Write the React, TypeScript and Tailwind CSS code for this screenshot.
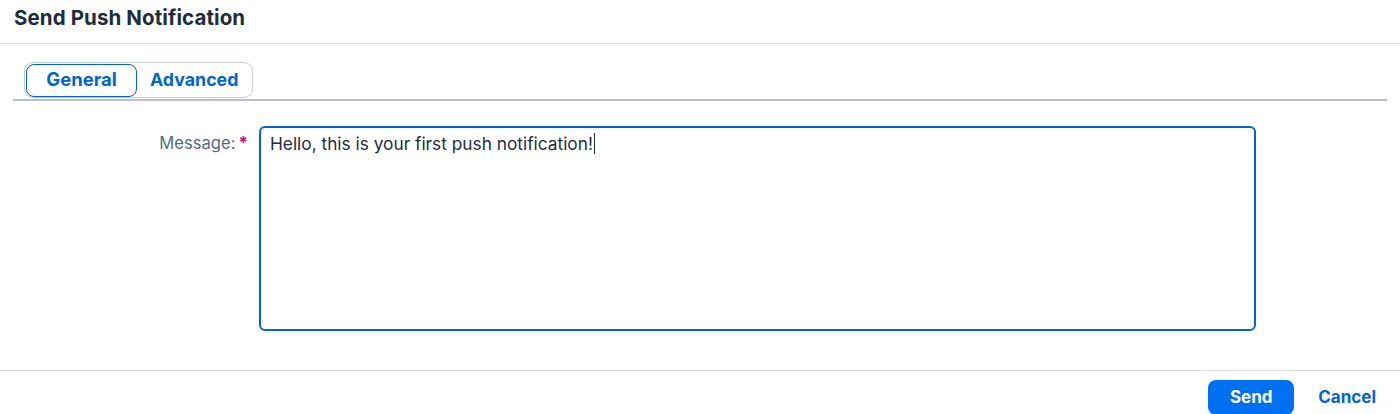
export default function App() {
  return (
    <div className="w-[1400px] h-[414px] overflow-hidden bg-white font-['Inter',_sans-serif] text-[#1d2d3e]">
      {/* Header */}
      <div className="h-[44px] border-b border-[#d9d9d9] pl-[14px] pt-[5px]">
        <h1 className="text-[20.5px] font-bold leading-[26px] tracking-[0.1px]">Send Push Notification</h1>
      </div>

      {/* Tabs */}
      <div className="mx-[13px] mt-[18px] border-b-2 border-[#b8c0c8] pl-[11px] pb-[1px]">
        <div className="inline-flex h-[36px] items-center rounded-[9px] border border-[#c6ccd2] p-[1px]">
          <button className="h-[33px] w-[111px] rounded-[8px] border border-[#0064d9] text-[18.5px] font-bold text-[#0064d9]">
            General
          </button>
          <button className="h-[33px] px-[13px] text-[17.8px] font-bold text-[#0064d9]">Advanced</button>
        </div>
      </div>

      {/* Form */}
      <div className="mt-[25px] flex items-start">
        <div className="flex w-[259px] items-center justify-end pr-[11px] pt-[5px]">
          <span className="text-[16.6px] text-[#556b82]">Message:</span>
          <span className="ml-[3px] text-[17px] font-bold text-[#c0137a]">*</span>
        </div>
        <div className="h-[205px] w-[997px] rounded-[6px] border-2 border-[#0064d9] px-[9px] py-[1px] text-[17.3px] leading-[26px]">
          Hello, this is your first push notification!
          <span className="ml-[1px] inline-block h-[21px] w-[1px] translate-y-[4px] bg-[#1d2d3e]" />
        </div>
      </div>

      {/* Footer */}
      <div className="mt-[39px] flex items-center justify-end gap-[24px] border-t border-[#d9d9d9] pr-[24px] pt-[9px]">
        <button className="h-[35px] w-[86px] rounded-[8px] bg-[#0070f2] text-[17px] font-bold text-white">Send</button>
        <button className="text-[17px] font-bold text-[#0064d9]">Cancel</button>
      </div>
    </div>
  );
}
